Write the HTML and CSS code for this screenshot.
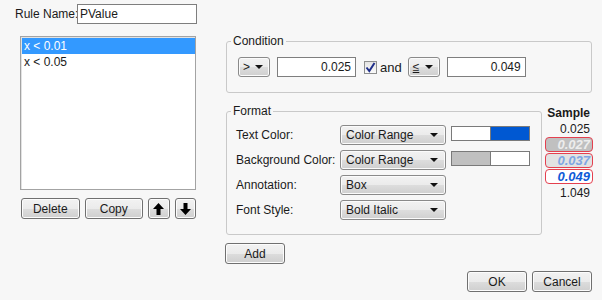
FILE: index.html
```html
<!DOCTYPE html>
<html lang="en">
<head>
    <meta charset="UTF-8">
    <title>Conditional Format Rule</title>
    <link rel="stylesheet" href="styles.css">
</head>
<body>
    <div class="dialog">
        <div class="rule-name">
            <label>Rule Name:</label>
            <div class="textbox">PValue</div>
        </div>

        <div class="main">
            <div class="left">
                <div class="rule-list">
                    <div class="rule selected">x &lt; 0.01</div>
                    <div class="rule">x &lt; 0.05</div>
                </div>
                <div class="list-buttons">
                    <button class="btn wide">Delete</button>
                    <button class="btn wide">Copy</button>
                    <button class="btn square">
                        <svg width="11" height="12" viewBox="0 0 11 12"><path d="M5.5 0 L11 6 L7.5 6 L7.5 12 L3.5 12 L3.5 6 L0 6 Z" fill="#000"/></svg>
                    </button>
                    <button class="btn square">
                        <svg width="11" height="12" viewBox="0 0 11 12"><path d="M5.5 12 L11 6 L7.5 6 L7.5 0 L3.5 0 L3.5 6 L0 6 Z" fill="#000"/></svg>
                    </button>
                </div>
            </div>

            <div class="right">
                <fieldset class="group condition">
                    <legend>Condition</legend>
                    <div class="cond-row">
                        <div class="combo small"><span>&gt;</span><i class="arrow"></i></div>
                        <div class="textbox num">0.025</div>
                        <span class="checkbox">
                            <svg width="11" height="11" viewBox="0 0 11 11"><path d="M1.5 5.5 L4.3 9 L9.5 1" fill="none" stroke="#1f2f8a" stroke-width="2"/></svg>
                        </span>
                        <span class="and">and</span>
                        <div class="combo small"><span class="le">&le;</span><i class="arrow"></i></div>
                        <div class="textbox num">0.049</div>
                    </div>
                </fieldset>

                <div class="format-row">
                    <fieldset class="group format">
                        <legend>Format</legend>
                        <div class="fmt-row">
                            <label>Text Color:</label>
                            <div class="combo"><span>Color Range</span><i class="arrow"></i></div>
                            <div class="swatch"><span class="white"></span><span class="blue"></span></div>
                        </div>
                        <div class="fmt-row">
                            <label>Background Color:</label>
                            <div class="combo"><span>Color Range</span><i class="arrow"></i></div>
                            <div class="swatch"><span class="grey"></span><span class="white"></span></div>
                        </div>
                        <div class="fmt-row">
                            <label>Annotation:</label>
                            <div class="combo"><span>Box</span><i class="arrow"></i></div>
                        </div>
                        <div class="fmt-row">
                            <label>Font Style:</label>
                            <div class="combo"><span>Bold Italic</span><i class="arrow"></i></div>
                        </div>
                    </fieldset>

                    <div class="sample">
                        <div class="sample-head">Sample</div>
                        <div class="val">0.025</div>
                        <div class="val boxed v1">0.027</div>
                        <div class="val boxed v2">0.037</div>
                        <div class="val boxed v3">0.049</div>
                        <div class="val">1.049</div>
                    </div>
                </div>

                <button class="btn wide add">Add</button>

                <div class="dialog-buttons">
                    <button class="btn wide">OK</button>
                    <button class="btn wide">Cancel</button>
                </div>
            </div>
        </div>
    </div>
</body>
</html>
```

FILE: styles.css
```css
body {
    margin: 0;
    background-color: #f7f7f7;
    font-family: "Liberation Sans", Arial, sans-serif;
    font-size: 12px;
    color: #1a1a1a;
}
.dialog {
    width: 602px;
    height: 300px;
    overflow: hidden;
}
.rule-name {
    display: flex;
    align-items: center;
    padding: 4px 0 0 15px;
    height: 20px;
}
.rule-name label {
    width: 62px;
    white-space: nowrap;
}
.textbox {
    box-sizing: border-box;
    height: 20px;
    width: 120px;
    border: 1px solid #7e7e7e;
    background: #fff;
    padding: 0 2px;
    line-height: 18px;
}
.textbox.num {
    width: 79px;
    text-align: right;
    padding-right: 4px;
}
.main {
    display: flex;
    margin-top: 10px;
}
.left {
    width: 176px;
    margin-left: 20px;
}
.rule-list {
    box-sizing: border-box;
    margin-top: 2px;
    height: 154px;
    background: #fff;
    border: 1px solid #a3a3a3;
    box-shadow: inset 1px 1px 0 #e2e2e2;
    padding: 1px 0 0 1px;
}
.rule {
    height: 16px;
    line-height: 16px;
    padding-left: 2px;
}
.rule.selected {
    background: #3399ff;
    color: #fff;
}
.list-buttons {
    display: flex;
    gap: 5px;
    margin: 8px 0 0 1px;
}
.btn {
    box-sizing: border-box;
    height: 21px;
    padding: 0;
    border: 1px solid #707070;
    border-radius: 3px;
    background: linear-gradient(#f2f2f2 0%, #ebebeb 50%, #dddddd 51%, #cfcfcf 100%);
    font-family: inherit;
    font-size: 12px;
    color: #1a1a1a;
    box-shadow: inset 0 0 0 1px #fcfcfc;
}
.btn.wide {
    width: 60px;
}
.btn.square {
    width: 22px;
    display: flex;
    align-items: center;
    justify-content: center;
}
.right {
    width: 367px;
    margin-left: 30px;
}
.group {
    box-sizing: border-box;
    margin: 0;
    min-width: 0;
    border: 1px solid #c9c9c9;
    border-radius: 3px;
}
.group legend {
    padding: 0 2px;
    line-height: 15px;
}
.condition {
    width: 366px;
    padding: 8px 11px 15px 11px;
}
.condition legend {
    margin-left: -7px;
}
.cond-row {
    display: flex;
    align-items: center;
    height: 20px;
}
.cond-row .textbox {
    margin-left: 7px;
}
.combo {
    box-sizing: border-box;
    display: flex;
    align-items: center;
    justify-content: space-between;
    width: 106px;
    height: 20px;
    padding: 0 7px 0 5px;
    border: 1px solid #8a8a8a;
    border-radius: 3px;
    background: linear-gradient(#f2f2f2 0%, #ebebeb 50%, #dddddd 51%, #cfcfcf 100%);
    box-shadow: inset 0 0 0 1px #fbfbfb;
}
.combo.small {
    width: 32px;
    padding: 0 6px 0 4px;
}
.le {
    text-decoration: underline;
}
.arrow {
    width: 0;
    height: 0;
    border-left: 4px solid transparent;
    border-right: 4px solid transparent;
    border-top: 4px solid #111;
}
.checkbox {
    box-sizing: border-box;
    width: 13px;
    height: 13px;
    margin-left: 8px;
    border: 1px solid #8e8f8f;
    background: linear-gradient(#e4e4e4, #fafafa);
    display: flex;
    align-items: center;
    justify-content: center;
}
.and {
    margin: 0 6px 0 3px;
    font-size: 13px;
}
.format-row {
    display: flex;
    margin-top: 11px;
}
.format {
    width: 316px;
    padding: 6px 9px 14px 9px;
}
.format legend {
    margin-left: -5px;
}
.fmt-row {
    display: flex;
    align-items: flex-start;
    height: 20px;
    margin-bottom: 5px;
}
.fmt-row:last-child {
    margin-bottom: 0;
}
.fmt-row label {
    width: 104px;
    line-height: 20px;
    white-space: nowrap;
}
.swatch {
    display: flex;
    box-sizing: border-box;
    width: 79px;
    height: 15px;
    margin: 1px 0 0 5px;
    border: 1px solid #7a7a7a;
}
.swatch span {
    flex: 1;
}
.swatch span:first-child {
    border-right: 1px solid #7a7a7a;
}
.swatch .white { background: #fff; }
.swatch .blue { background: #0058d2; }
.swatch .grey { background: #c0c0c0; }
.sample {
    width: 48px;
    margin-left: 3px;
    margin-top: 1px;
    text-align: right;
}
.sample-head {
    font-weight: bold;
    line-height: 16px;
    padding-right: 3px;
}
.val {
    height: 16px;
    line-height: 16px;
    padding-right: 3px;
}
.val.boxed {
    box-sizing: border-box;
    height: 15px;
    line-height: 13px;
    margin-bottom: 1px;
    border: 1px solid #e4404f;
    border-radius: 4px;
    font-weight: bold;
    font-style: italic;
    font-size: 13px;
    padding-right: 2px;
}
.v1 { background: #c0c0c0; color: #ededed; }
.v2 { background: #e2e2e2; color: #7ea6e2; }
.v3 { background: #fff; color: #0d5ad8; }
.add {
    margin: 8px 0 0 -1px;
    display: block;
}
.dialog-buttons {
    display: flex;
    justify-content: flex-end;
    gap: 5px;
    margin-top: 7px;
    padding-right: 1px;
}
```
